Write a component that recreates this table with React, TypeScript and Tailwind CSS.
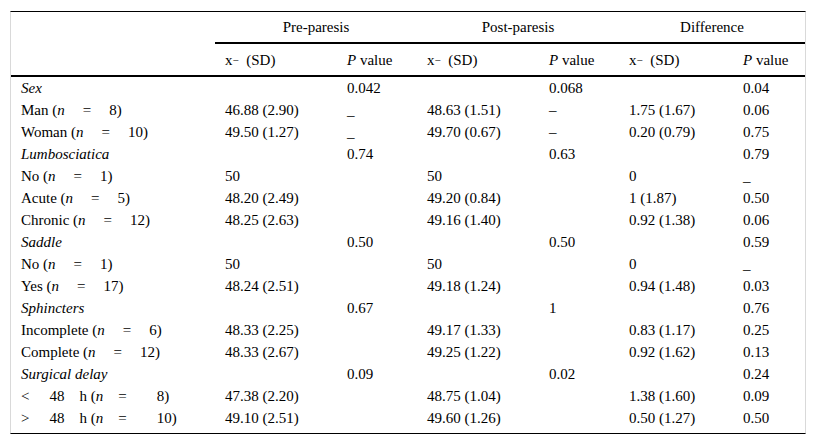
import React from "react";

const cols = "grid grid-cols-[204px_122px_80px_122px_80px_114px_72px]";
const E = "\u2003";
const T = "\u2009";

type Row = {
  label: React.ReactNode;
  head?: boolean;
  cells: string[];
};

// label of the form "Man (n = 8)", spaced as in the source table
const N = (pre: string, n: string) => (
  <>
    {pre}(<i>n</i>
    {E + T}={E + T}
    {n})
  </>
);

const H = (sign: string, n: string) => (
  <>
    {sign}
    {E + "\u2004"}48{E}h (<i>n</i>
    {E}={E + E}
    {n})
  </>
);

const rows: Row[] = [
  { label: "Sex", head: true, cells: ["", "0.042", "", "0.068", "", "0.04"] },
  { label: N("Man ", "8"), cells: ["46.88 (2.90)", "_", "48.63 (1.51)", "–", "1.75 (1.67)", "0.06"] },
  { label: N("Woman ", "10"), cells: ["49.50 (1.27)", "_", "49.70 (0.67)", "–", "0.20 (0.79)", "0.75"] },
  { label: "Lumbosciatica", head: true, cells: ["", "0.74", "", "0.63", "", "0.79"] },
  { label: N("No ", "1"), cells: ["50", "", "50", "", "0", "_"] },
  { label: N("Acute ", "5"), cells: ["48.20 (2.49)", "", "49.20 (0.84)", "", "1 (1.87)", "0.50"] },
  { label: N("Chronic ", "12"), cells: ["48.25 (2.63)", "", "49.16 (1.40)", "", "0.92 (1.38)", "0.06"] },
  { label: "Saddle", head: true, cells: ["", "0.50", "", "0.50", "", "0.59"] },
  { label: N("No ", "1"), cells: ["50", "", "50", "", "0", "_"] },
  { label: N("Yes ", "17"), cells: ["48.24 (2.51)", "", "49.18 (1.24)", "", "0.94 (1.48)", "0.03"] },
  { label: "Sphincters", head: true, cells: ["", "0.67", "", "1", "", "0.76"] },
  { label: N("Incomplete ", "6"), cells: ["48.33 (2.25)", "", "49.17 (1.33)", "", "0.83 (1.17)", "0.25"] },
  { label: N("Complete ", "12"), cells: ["48.33 (2.67)", "", "49.25 (1.22)", "", "0.92 (1.62)", "0.13"] },
  { label: "Surgical delay", head: true, cells: ["", "0.09", "", "0.02", "", "0.24"] },
  { label: H("<", "8"), cells: ["47.38 (2.20)", "", "48.75 (1.04)", "", "1.38 (1.60)", "0.09"] },
  { label: H(">", "10"), cells: ["49.10 (2.51)", "", "49.60 (1.26)", "", "0.50 (1.27)", "0.50"] },
];

function Mean() {
  return (
    <span>
      x<sup className="relative top-[-1px] text-[11px]">−</sup>
      {"\u2002"}(SD)
    </span>
  );
}

function PVal() {
  return (
    <span>
      <i>P</i> value
    </span>
  );
}

export default function App() {
  return (
    <div className="min-h-screen bg-white pt-[11px] pl-[10px] [font-family:'Liberation_Serif','Times_New_Roman',serif] text-[15px] leading-none text-black">
      <div className="w-[796px] border-t border-b border-t-black border-b-black border-x border-x-[#d9d9d9] pb-[4px]">
        <div className={cols}>
          <div className="h-[32px]" />
          {["Pre-paresis", "Post-paresis", "Difference"].map((g) => (
            <div
              key={g}
              className="col-span-2 h-[32px] border-b-2 border-black flex items-center justify-center pt-[1px]"
            >
              {g}
            </div>
          ))}
        </div>
        <div className={`${cols} h-[33px] border-b-2 border-black`}>
          <div />
          {[0, 1, 2].map((i) => (
            <React.Fragment key={i}>
              <div className="flex items-center pl-[10px] pt-[1px]">
                <Mean />
              </div>
              <div className="flex items-center pl-[10px] pt-[1px]">
                <PVal />
              </div>
            </React.Fragment>
          ))}
        </div>
        {rows.map((r, i) => (
          <div key={i} className={`${cols} h-[22px]`}>
            <div className={`flex items-center pl-[10px] whitespace-nowrap ${r.head ? "italic" : ""}`}>
              {r.label}
            </div>
            {r.cells.map((c, j) => (
              <div key={j} className="flex items-center pl-[10px] whitespace-nowrap">
                {c}
              </div>
            ))}
          </div>
        ))}
      </div>
    </div>
  );
}
